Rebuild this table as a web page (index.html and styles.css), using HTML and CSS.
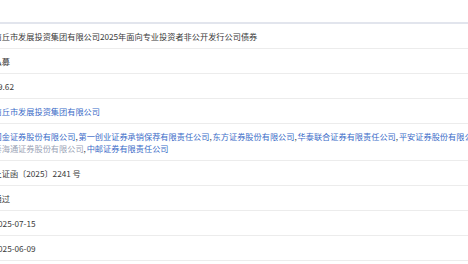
FILE: index.html
```html
<!DOCTYPE html>
<html lang="zh-CN">
<head>
<meta charset="utf-8">
<title>债券详情</title>
<link rel="stylesheet" href="styles.css">
</head>
<body>
<div class="detail">
  <div class="row">商丘市发展投资集团有限公司2025年面向专业投资者非公开发行公司债券</div>
  <div class="row">私募</div>
  <div class="row">19.62</div>
  <div class="row"><a class="link" href="#">商丘市发展投资集团有限公司</a></div>
  <div class="row"><a class="link" href="#">国金证券股份有限公司</a><span class="sep">,</span><a class="link" href="#">第一创业证券承销保荐有限责任公司</a><span class="sep">,</span><a class="link" href="#">东方证券股份有限公司</a><span class="sep">,</span><a class="link" href="#">华泰联合证券有限责任公司</a><span class="sep">,</span><a class="link" href="#">平安证券股份有限公司</a><span class="sep">,</span><a class="link visited" href="#">国泰海通证券股份有限公司</a><span class="sep">,</span><a class="link" href="#">中邮证券有限责任公司</a></div>
  <div class="row">上证函〔2025〕2241 号</div>
  <div class="row">通过</div>
  <div class="row">2025-07-15</div>
  <div class="row">2025-06-09</div>
</div>
</body>
</html>
```
FILE: styles.css
```css
html, body {
  margin: 0;
  padding: 0;
  background: #ffffff;
  overflow: hidden;
}

.detail {
  margin-top: 22px;
  margin-left: -6.5px;
  width: 502px;
  border-top: 2px solid #e2e5ed;
  font-family: "Noto Sans CJK SC", "Microsoft YaHei", sans-serif;
  font-size: 8.2px;
  color: #3a3a3a;
}

.row {
  padding: 6px 0;
  line-height: 12px;
  border-bottom: 1px solid #ececec;
}

.link {
  color: #3b6cc8;
  text-decoration: none;
}

.link.visited {
  color: #9aa3b5;
}

.sep {
  color: #3a3a3a;
  margin-right: 0.8px;
}
```
